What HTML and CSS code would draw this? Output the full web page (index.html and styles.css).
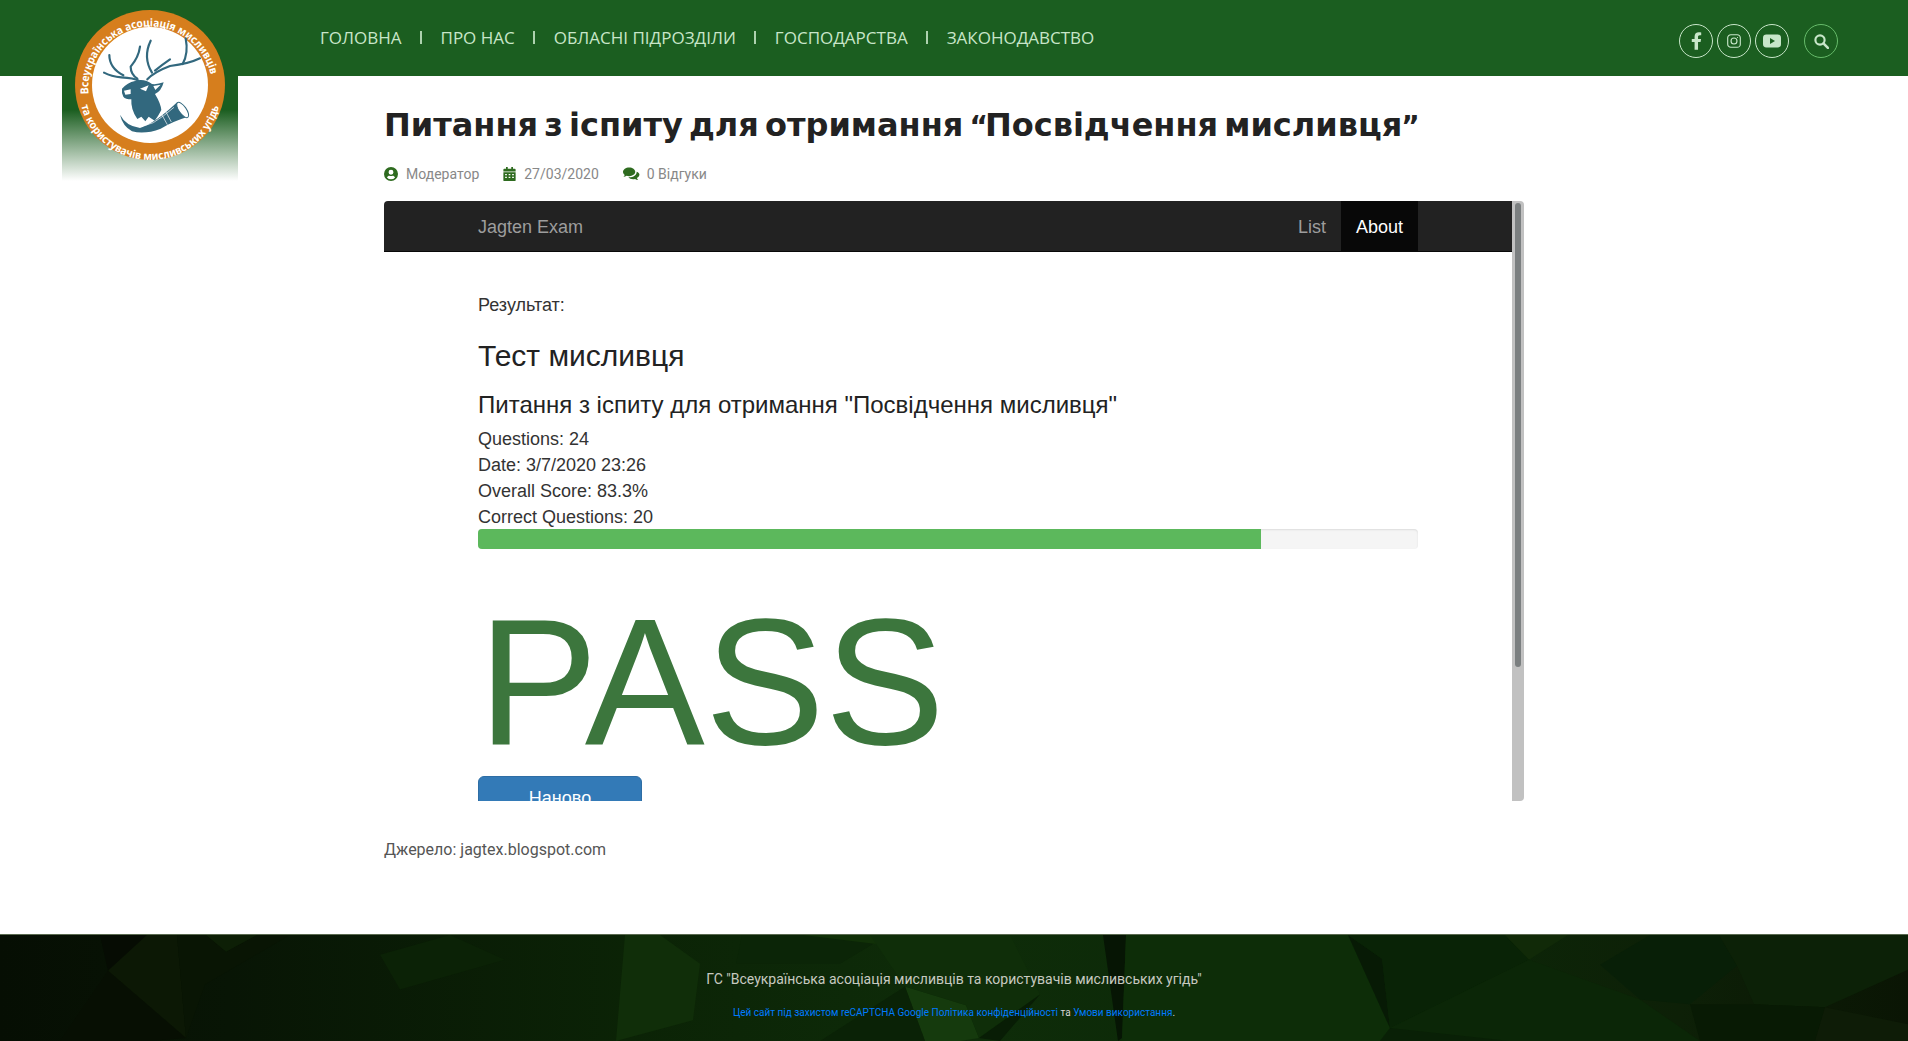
FILE: index.html
```html
<!DOCTYPE html>
<html lang="uk">
<head>
<meta charset="utf-8">
<title>Питання з іспиту</title>
<link rel="stylesheet" href="styles.css">
</head>
<body>
<header class="site-header">
  <a class="logo" href="#">
    <svg class="logo-svg" viewBox="0 0 150 150" width="150" height="150">
      <defs>
        <path id="arcTop" d="M 13.5 84 A 62 62 0 1 1 137 84"/>
        <path id="arcBottom" d="M 4.5 85 A 71 71 0 0 0 146 85"/>
      </defs>
      <circle cx="75" cy="75" r="75" fill="#d67e1d"/>
      <circle cx="75" cy="75" r="58" fill="#fff"/>
      <text class="logo-text"><textPath href="#arcTop" textLength="186" lengthAdjust="spacingAndGlyphs">Всеукраїнська асоціація мисливців</textPath></text>
      <text class="logo-text"><textPath href="#arcBottom" textLength="188" lengthAdjust="spacingAndGlyphs" startOffset="11">та користувачів мисливських угідь</textPath></text>
      <g transform="translate(-35 -10) scale(.33333)" fill="#32687e" stroke="none">
        <g fill="none" stroke="#32687e" stroke-width="6.500" stroke-linecap="round" stroke-linejoin="round">
          <path d="M322 238 Q342 216 390 198 Q445 192 480 175"/>
          <path d="M437 115 Q446 160 428 192"/>
          <path d="M390 178 Q365 195 345 212"/>
          <path d="M332 122 Q308 172 336 218"/>
          <path d="M296 242 Q282 234 244 232 Q214 230 192 218"/>
          <path d="M208 165 Q208 204 250 226"/>
          <path d="M300 140 Q296 172 272 200 Q272 222 292 236"/>
        </g>
        <path d="M246 266 Q262 248 285 243 Q312 234 336 252 Q352 254 371 247 Q364 274 345 282 Q362 310 364 330 Q354 350 344 362 L326 350 L316 364 L304 350 L292 357 Q272 330 274 298 Q256 298 250 290 Q244 278 246 266Z"/>
        <path d="M300 266 L326 256 L318 274 Z M340 258 L362 254 L346 270 Z M252 272 L272 268 L272 282 L256 284Z" fill="#fff"/>
        <path d="M240 344 Q258 378 300 384 Q345 370 412 306 L444 350 Q395 365 362 386 Q315 404 276 394 Q248 378 240 344Z"/>
        <ellipse cx="428" cy="330" rx="11" ry="27" transform="rotate(-35 428 330)" fill="#fff" stroke="#32687e" stroke-width="3"/>
        <path d="M262 366 Q300 386 340 368 Q370 350 402 322 M366 345 L382 374 M378 336 L394 366" fill="none" stroke="#fff" stroke-width="2"/>
      </g>
    </svg>
  </a>
  <nav class="main-nav">
    <a href="#">Головна</a><span class="sep"></span>
    <a href="#">Про нас</a><span class="sep"></span>
    <a href="#">Обласні підрозділи</a><span class="sep"></span>
    <a href="#">Господарства</a><span class="sep"></span>
    <a href="#">Законодавство</a>
  </nav>
  <div class="header-tools">
    <a class="round" href="#"><svg viewBox="0 0 320 512" width="11" height="18"><path fill="currentColor" d="M279.14 288l14.22-92.66h-88.91v-60.13c0-25.35 12.42-50.06 52.24-50.06h40.42V6.26S260.43 0 225.36 0c-73.22 0-121.08 44.38-121.08 124.72v70.62H22.89V288h81.39v224h100.17V288z"/></svg></a>
    <a class="round" href="#"><svg viewBox="0 0 16 16" width="14" height="14" fill="none" stroke="currentColor" stroke-width="1.3"><rect x=".8" y=".8" width="14.4" height="14.4" rx="3.6"/><circle cx="8" cy="8" r="3.4"/><circle cx="12" cy="4" r=".7" fill="currentColor" stroke="none"/></svg></a>
    <a class="round" href="#"><svg viewBox="0 0 18 14" width="18" height="14"><rect width="18" height="13" y=".5" rx="3.4" fill="currentColor"/><path d="M7 4l5 3-5 3z" fill="#1b5e20"/></svg></a>
    <a class="round round-search" href="#"><svg viewBox="0 0 14 14" width="15" height="15" fill="none" stroke="#c8e6c9" stroke-width="2"><circle cx="5.6" cy="5.6" r="4.3"/><path d="M8.800 8.800l4.200 4.200" stroke-linecap="round" stroke-width="2.400"/></svg></a>
  </div>
</header>

<main class="article">
  <h1 class="article-title">Питання з іспиту для отримання <span class="quote-open">“</span>Посвідчення мисливця<span class="quote-close">”</span></h1>
  <div class="meta">
    <span class="meta-item"><svg class="meta-icon" viewBox="0 0 16 16" width="14" height="14"><path fill="#2e6b1f" d="M8 0a8 8 0 1 0 0 16A8 8 0 0 0 8 0zm0 3.2a2.8 2.8 0 1 1 0 5.6 2.8 2.8 0 0 1 0-5.6zM8 14a6 6 0 0 1-4.6-2.1C4 10.600 5.200 10 6 10c.6 0 1.200.3 2 .3s1.400-.3 2-.3c.8 0 2 .6 2.600 1.900A6 6 0 0 1 8 14z"/></svg>Модератор</span>
    <span class="meta-item"><svg class="meta-icon" viewBox="0 0 14 16" width="13" height="14"><path fill="#2e6b1f" d="M3 0h2v2h4V0h2v2h2a1 1 0 0 1 1 1v2H0V3a1 1 0 0 1 1-1h2zM0 6h14v9a1 1 0 0 1-1 1H1a1 1 0 0 1-1-1zm2 2v1.500h2V8zm4 0v1.500h2V8zm4 0v1.500h2V8zM2 11v1.500h2V11zm4 0v1.500h2V11zm4 0v1.500h2V11z"/></svg>27/03/2020</span>
    <span class="meta-item"><svg class="meta-icon meta-icon-wide" viewBox="0 0 18 14" width="17" height="14"><path fill="#2e6b1f" d="M6.500 0C3 0 0 2 0 4.700c0 1.300.7 2.500 1.800 3.300-.2.800-.7 1.500-1.400 2 1.300 0 2.500-.4 3.400-1.100.8.300 1.800.4 2.700.4 3.600 0 6.500-2.100 6.500-4.600S10.100 0 6.500 0z"/><path fill="#2e6b1f" d="M14.500 4.600c.1 3.400-3.400 5.900-8 5.900l-.8-.1c1 1.300 2.900 2.100 5 2.100.7 0 1.400-.1 2-.3.900.700 2.100 1.100 3.400 1.100-.7-.5-1.200-1.200-1.400-2 1.700-.9 2.700-2.300 2.700-3.700 0-1.300-1.100-2.500-2.900-3z"/></svg>0 Відгуки</span>
  </div>

  <div class="frame">
    <div class="frame-view">
      <div class="exam-nav">
        <a class="exam-brand" href="#">Jagten Exam</a>
        <div class="exam-links">
          <a class="exam-link" href="#">List</a>
          <a class="exam-link exam-link-active" href="#">About</a>
        </div>
      </div>
      <div class="exam-body">
        <p class="result-label">Результат:</p>
        <h3 class="exam-h3">Тест мисливця</h3>
        <h4 class="exam-h4">Питання з іспиту для отримання "Посвідчення мисливця"</h4>
        <div class="stats">
          <div>Questions: 24</div>
          <div>Date: 3/7/2020 23:26</div>
          <div>Overall Score: 83.3%</div>
          <div>Correct Questions: 20</div>
        </div>
        <div class="progress"><div class="progress-bar" style="width:83.3%"></div></div>
        <div class="pass">PASS</div>
        <a class="again" href="#">Наново</a>
      </div>
    </div>
    <div class="scrollbar"><div class="scrollbar-thumb"></div></div>
  </div>

  <p class="source">Джерело: jagtex.blogspot.com</p>
</main>

<footer class="site-footer">
  <svg class="footer-art" viewBox="0 0 1908 107" preserveAspectRatio="none" aria-hidden="true">
    <defs>
      <linearGradient id="fg" x1="0" x2="1" y1="0" y2="0">
        <stop offset="0" stop-color="#060e03"/>
        <stop offset=".12" stop-color="#081505"/>
        <stop offset=".33" stop-color="#0b2306"/>
        <stop offset=".5" stop-color="#0e2c09"/>
        <stop offset=".72" stop-color="#0c2908"/>
        <stop offset=".88" stop-color="#0d2007"/>
        <stop offset="1" stop-color="#0a1504"/>
      </linearGradient>
    </defs>
    <rect width="1908" height="107" fill="url(#fg)"/>
    <polygon points="100,0 147,0 108,36" fill="#060c03"/>
    <polygon points="108,36 147,0 177,0 186,104" fill="#0c1805"/>
    <polygon points="108,36 186,104 150,107 60,107" fill="#070f03"/>
    <polygon points="177,0 206,0 226,17 257,0 290,0 205,50 186,104" fill="#091504"/>
    <polygon points="206,0 257,0 226,17" fill="#0d1f06"/>
    <polygon points="450,0 505,25 400,55 380,20" fill="#0b2206"/>
    <polygon points="616,107 625,0 660,0 700,29 693,86" fill="#102e09"/>
    <polygon points="742,0 888,0 840,29 736,29" fill="#0b2507"/>
    <polygon points="803,0 888,0 876,9" fill="#113108"/>
    <polygon points="905,52 966,71 979,104 960,107 925,107" fill="#153a0d"/>
    <polygon points="905,52 870,0 1010,0 1040,60 979,104 966,71" fill="#0f2e09"/>
    <polygon points="820,107 905,52 925,107" fill="#0a2206"/>
    <polygon points="979,104 1040,60 1000,107" fill="#081d05"/>
    <polygon points="1103,0 1126,0 1122,104 1118,107" fill="#061504"/>
    <polygon points="1126,0 1348,0 1390,94 1380,107 1122,107" fill="#0d2d08"/>
    <polygon points="1348,0 1382,24 1390,94" fill="#071a05"/>
    <polygon points="1348,0 1505,0 1529,25 1390,94 1382,24" fill="#092306"/>
    <polygon points="1505,0 1568,0 1529,25" fill="#112a08"/>
    <polygon points="1390,94 1500,98 1510,107 1380,107" fill="#092006"/>
    <polygon points="1529,25 1640,65 1700,107 1510,107 1390,94" fill="#0b2607"/>
    <polygon points="1650,0 1719,0 1737,31 1690,70 1640,65 1600,30" fill="#081f07"/>
    <polygon points="1719,0 1908,0 1908,35 1825,73 1754,70 1737,31" fill="#0c2107"/>
    <polygon points="1754,70 1825,73 1815,107 1700,107 1690,70" fill="#081a04"/>
    <polygon points="1825,73 1908,90 1908,107 1815,107" fill="#0e1c07"/>
  </svg>
  <p class="footer-name">ГС "Всеукраїнська асоціація мисливців та користувачів мисливських угідь"</p>
  <p class="footer-legal"><a href="#">Цей сайт під захистом reCAPTCHA Google</a> <a href="#">Політика конфіденційності</a> та <a href="#">Умови використання</a>.</p>
</footer>
</body>
</html>
```

FILE: styles.css
```css
* { box-sizing: border-box; }
html, body { margin: 0; padding: 0; }
body { background: #fff; font-family: "Roboto", "Liberation Sans", sans-serif; color: #444; height: 1041px; overflow: hidden; }
a { text-decoration: none; color: inherit; }

.site-header { position: relative; display: flex; align-items: center; height: 76px; padding: 0 70px 0 320px; background: #1b5e20; }
.logo { position: absolute; left: 62px; top: 0; width: 176px; height: 181px; padding: 10px 13px; background: linear-gradient(#1b5e20 0, #1b5e20 110px, #ffffff 100%); }
.logo-svg { display: block; }
.logo-text { font: 700 11px "Noto Sans", "DejaVu Sans", sans-serif; fill: #fff; }

.main-nav { display: flex; align-items: center; margin-top: -1px; font: 400 17px "Open Sans", sans-serif; color: #c8e6c9; text-transform: uppercase; }
.sep { width: 2px; height: 13px; background: #c8e6c9; opacity: .85; margin: 0 19px 0 18px; }

.header-tools { display: flex; align-items: center; margin-left: auto; margin-top: 6px; gap: 4px; }
.round { display: flex; align-items: center; justify-content: center; width: 34px; height: 34px; border: 1.5px solid #c8e6c9; border-radius: 50%; color: #c8e6c9; }
.round-search { margin-left: 11px; border-color: #66bb6a; }

.article { padding-left: 384px; width: 1525px; }
.article-title { margin: 0; height: 69px; padding-top: 29px; font: 700 32px/40px "DejaVu Sans", sans-serif; word-spacing: -5px; color: #222; white-space: nowrap; }
.quote-open { font-size: 28px; line-height: 0; letter-spacing: -3px; }
.quote-close { font-size: 28px; line-height: 0; margin-left: -1px; }
.meta { display: flex; align-items: center; gap: 24px; margin-top: 19px; height: 20px; font-size: 14px; color: #888; }
.meta-item { display: flex; align-items: center; }
.meta-icon { margin-right: 8px; }
.meta-icon-wide { margin-right: 7px; }

.frame { display: flex; height: 600px; margin-top: 17px; border-radius: 4px; overflow: hidden; width: 1140px; background: #fff; }
.frame-view { flex: 1; min-width: 0; overflow: hidden; font-family: "Liberation Sans", sans-serif; color: #333; }
.scrollbar { flex: 0 0 12px; padding: 2px 3px 0 3px; background: #c1c1c1; }
.scrollbar-thumb { height: 464px; background: #7b7f80; border-radius: 3px; }

.exam-nav { display: flex; align-items: center; height: 51px; padding: 0 94px 0 94px; background: #222; border-bottom: 1px solid #080808; font-size: 18px; color: #9d9d9d; }
.exam-brand { padding-top: 2px; }
.exam-links { display: flex; align-items: stretch; height: 50px; margin-left: auto; }
.exam-link { display: flex; align-items: center; padding: 2px 15px 0; }
.exam-link-active { background: #080808; color: #fff; }

.exam-body { padding: 40px 94px 0 94px; font-size: 18px; line-height: 26px; }
.result-label { margin: 0; }
.exam-h3 { margin: 21px 0 0; font-size: 30px; font-weight: 400; line-height: 33px; color: #222; }
.exam-h4 { margin: 20px 0 0; font-size: 24px; font-weight: 400; line-height: 26px; color: #222; }
.stats { margin-top: 8px; }
.progress { height: 20px; margin-top: -1px; background: #f5f5f5; border-radius: 4px; overflow: hidden; box-shadow: inset 0 1px 2px rgba(0,0,0,.1); }
.progress-bar { height: 100%; background: #5cb85c; }
.pass { margin-top: 38px; font-size: 180px; line-height: 189px; color: #3c763d; }
.again { display: block; width: 164px; height: 60px; padding-top: 8px; background: #337ab7; border: 1px solid #2e6da4; border-radius: 6px; color: #fff; text-align: center; font-size: 18px; }

.source { margin: 37px 0 0; font-size: 16px; line-height: 24px; color: #555; }

.site-footer { position: absolute; left: 0; right: 0; top: 934px; height: 107px; overflow: hidden; border-top: 1px solid #5a6a50; text-align: center; }
.footer-art { position: absolute; left: 0; top: 0; width: 100%; height: 100%; }
.footer-name { position: relative; margin: 0; padding-top: 34px; font-size: 14px; line-height: 20px; color: #c7c9c0; }
.footer-legal { position: relative; margin: 0; padding-top: 17px; font-size: 10px; line-height: 14px; color: #d5d5d5; }
.footer-legal a { color: #007bff; }
```
